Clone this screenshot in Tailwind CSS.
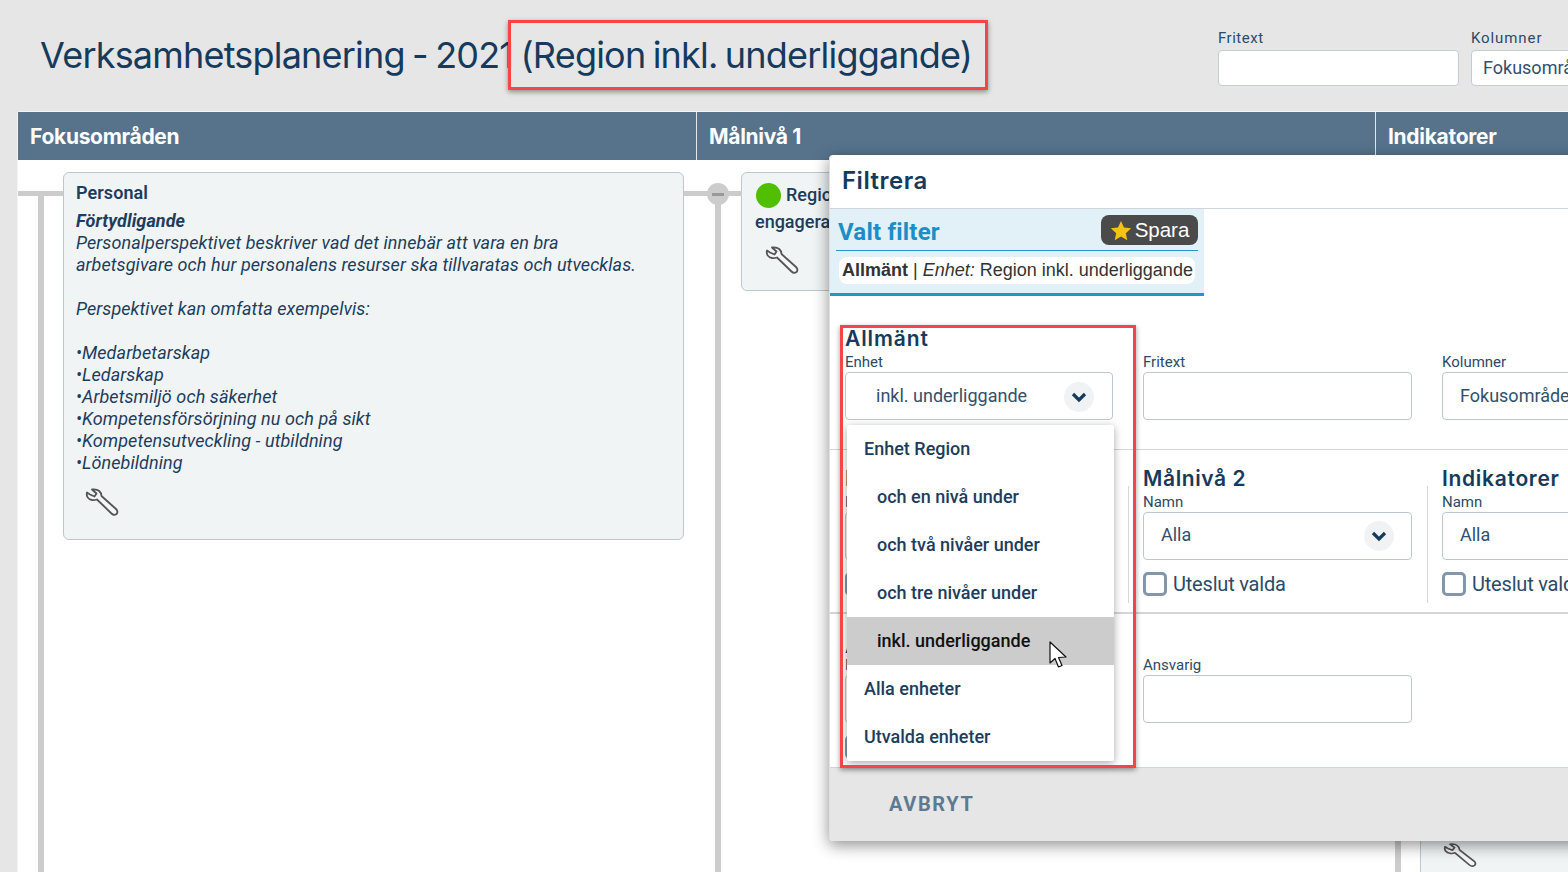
<!doctype html>
<html lang="sv">
<head>
<meta charset="utf-8">
<script src="https://cdn.jsdelivr.net/npm/@tailwindcss/browser@4"></script>
</head>
<body class="m-0">
<div class="relative w-[1568px] h-[872px] overflow-hidden bg-[#e6e6e6] flex flex-col font-['Roboto',sans-serif] text-[#1d3d5c]">

  <!-- Page header -->
  <header class="h-[111px] shrink-0 flex justify-between pl-[40px]">
    <h1 class="mt-[33px] text-[36px] leading-[44px] font-normal tracking-[-0.8px] [word-spacing:-2px] text-[#163a5c] font-['Inter',sans-serif] whitespace-nowrap">Verksamhetsplanering - 2021 (Region inkl. underliggande)</h1>
    <div class="flex gap-3 mt-[30px] w-[350px] shrink-0">
      <div class="w-[241px] shrink-0">
        <div class="text-[15px] leading-[17px] mb-[3px] tracking-[0.5px] text-[#2d4a66]">Fritext</div>
        <div class="h-[36px] bg-white border border-[#c3ccd5] rounded-[4px]"></div>
      </div>
      <div class="w-[241px] shrink-0">
        <div class="text-[15px] leading-[17px] mb-[3px] tracking-[0.9px] text-[#2d4a66]">Kolumner</div>
        <div class="h-[36px] bg-white border border-[#c3ccd5] rounded-[4px] px-[11px] text-[18px] leading-[33px] whitespace-nowrap overflow-hidden text-[#33506b]">Fokusområden</div>
      </div>
    </div>
  </header>

  <!-- Board -->
  <main class="ml-[17px] flex-1 flex flex-col bg-white border-l border-t border-[#f4f4f4] rounded-tl-[4px] w-[1700px] min-h-0">
    <div class="h-[48px] shrink-0 flex bg-[#57738c] text-white text-[21px] font-bold font-['Inter',sans-serif] tracking-[-0.3px] leading-[49px]">
      <div class="w-[679px] pl-[12px] border-r border-[#e6e6e6]">Fokusområden</div>
      <div class="w-[679px] pl-[12px] border-r border-[#e6e6e6]">Målnivå 1</div>
      <div class="flex-1 pl-[12px]">Indikatorer</div>
    </div>
    <div class="flex-1 flex min-h-0">
      <!-- Column 1 -->
      <section class="relative w-[679px] shrink-0 pt-[12px] pl-[45px]">
        <div class="absolute left-0 top-[31px] w-[45px] h-[5px] bg-[#cccccc]"></div>
        <div class="absolute left-[20px] top-[36px] bottom-0 w-[6px] bg-[#cccccc]"></div>
        <div class="absolute left-[666px] top-[31px] w-[13px] h-[5px] bg-[#cccccc]"></div>
        <article class="w-[621px] h-[368px] bg-[#f0f4f5] border border-[#bcc7d1] rounded-[6px] px-[12px] pt-[9px] text-[18px] leading-[22px] text-[#1d3d5c] tracking-[0.08px]">
          <div class="font-semibold">Personal</div>
          <div class="mt-[6px] font-bold italic">Förtydligande</div>
          <div class="italic">Personalperspektivet beskriver vad det innebär att vara en bra<br>arbetsgivare och hur personalens resurser ska tillvaratas och utvecklas.</div>
          <div class="italic mt-[22px]">Perspektivet kan omfatta exempelvis:</div>
          <div class="italic mt-[22px]">
            <div>•Medarbetarskap</div>
            <div>•Ledarskap</div>
            <div>•Arbetsmiljö och säkerhet</div>
            <div>•Kompetensförsörjning nu och på sikt</div>
            <div>•Kompetensutveckling - utbildning</div>
            <div>•Lönebildning</div>
          </div>
          <svg class="mt-[13px] ml-[9px] w-[34px] h-[30px]" viewBox="0 0 34 30" fill="#f4f6f7" stroke="#555" stroke-width="1.8" stroke-linejoin="round"><path d="M7 2.5 L11.5 6.5 L9.5 9.5 L5 7.5 L2 5.5 C1 9 3 12.5 7 13 C9 13.5 10.5 13 12 12.5 L26.5 26.5 C28 28 30 28.2 31.5 27 C33 25.5 32.5 23.5 31 22 L16.5 9 C16.5 5.5 13.5 1.5 7 2.5 Z"/></svg>
        </article>
      </section>
      <!-- Column 2 -->
      <section class="relative w-[679px] shrink-0 pt-[12px] pl-[44px]">
        <div class="absolute left-0 top-[31px] w-[45px] h-[5px] bg-[#cccccc]"></div>
        <div class="absolute left-[18px] top-[36px] bottom-0 w-[6px] bg-[#cccccc]"></div>
        <div class="absolute left-[10px] top-[23px] w-[22px] h-[22px] rounded-full bg-[#cccccc] flex items-center justify-center"><span class="block w-[12px] h-[3px] bg-[#999]"></span></div>
        <article class="w-[500px] h-[119px] bg-[#f0f4f5] border border-[#bcc7d1] rounded-[6px] pl-[13px] pt-[8px] text-[18px] leading-[27px] font-medium text-[#1d3d5c]">
          <div class="flex items-center gap-[5px]"><span class="ml-[1px] w-[25px] h-[25px] rounded-full bg-[#4fbf00] shrink-0"></span><span class="pb-[2px]">Region Personal</span></div>
          <div class="-mt-[2px]">engagerade medarbetare</div>
          <svg class="mt-[10px] ml-[10px] w-[34px] h-[30px]" viewBox="0 0 34 30" fill="#f4f6f7" stroke="#555" stroke-width="1.8" stroke-linejoin="round"><path d="M7 2.5 L11.5 6.5 L9.5 9.5 L5 7.5 L2 5.5 C1 9 3 12.5 7 13 C9 13.5 10.5 13 12 12.5 L26.5 26.5 C28 28 30 28.2 31.5 27 C33 25.5 32.5 23.5 31 22 L16.5 9 C16.5 5.5 13.5 1.5 7 2.5 Z"/></svg>
        </article>
      </section>
      <!-- Column 3 -->
      <section class="relative flex-1 pt-[500px] pl-[44px]">
        <div class="absolute left-[19px] top-[36px] bottom-0 w-[6px] bg-[#cccccc]"></div>
        <article class="h-full w-[300px] bg-[#f0f4f5] border-l border-[#bcc7d1] pt-[182px] pl-[22px]">
          <svg class="w-[34px] h-[26px]" viewBox="0 0 34 30" preserveAspectRatio="none" fill="#f4f6f7" stroke="#555" stroke-width="1.8" stroke-linejoin="round"><path d="M7 2.5 L11.5 6.5 L9.5 9.5 L5 7.5 L2 5.5 C1 9 3 12.5 7 13 C9 13.5 10.5 13 12 12.5 L26.5 26.5 C28 28 30 28.2 31.5 27 C33 25.5 32.5 23.5 31 22 L16.5 9 C16.5 5.5 13.5 1.5 7 2.5 Z"/></svg>
        </article>
      </section>
    </div>
  </main>

  <!-- Filter dialog -->
  <div class="absolute left-[829px] top-[155px] w-[900px] h-[686px] flex flex-col bg-white rounded-tl-[4px] rounded-bl-[4px] border-l border-[#e0e0e0] shadow-[0_4px_16px_rgba(0,0,0,0.45)]">
    <div class="h-[54px] shrink-0 border-b border-[#cfd5da] pl-[12px] text-[24px] leading-[52px] font-semibold tracking-[0.5px] text-[#163a5c] font-['Inter',sans-serif]">Filtrera</div>

    <!-- Selected filter -->
    <div class="h-[117px] shrink-0">
      <div class="w-[374px] h-[87px] bg-[#e2f0f7] border-b-[3px] border-[#2a92c8] px-[6px] pt-[6px]">
        <div class="h-[36px] border-b border-[#2a92c8] flex justify-between items-start">
          <span class="pl-[2px] pt-[2px] text-[24px] leading-[30px] font-bold tracking-[0.2px] text-[#1b8ec6] font-['Roboto',sans-serif]">Valt filter</span>
          <span class="w-[97px] h-[30px] bg-[#4a4a4a] rounded-[8px] flex items-center justify-center gap-[3px] text-white text-[20.5px] font-['Liberation_Sans',sans-serif]">
            <svg class="w-[22px] h-[21px]" viewBox="0 0 24 24" fill="#f6c20f"><path d="M12 1 15.4 8.6 23.6 9.5 17.5 15 19.2 23 12 18.9 4.8 23 6.5 15 .4 9.5 8.6 8.6Z"/></svg>Spara</span>
        </div>
        <div class="mt-[6px] ml-[3px] w-[356px] h-[27px] bg-white rounded-[8px] pl-[3px] text-[18px] leading-[27px] whitespace-nowrap text-[#333] font-['Liberation_Sans',sans-serif]"><b>Allmänt</b> | <i>Enhet:</i> Region inkl. underliggande</div>
      </div>
    </div>

    <!-- Allmänt -->
    <div class="h-[124px] shrink-0 border-b border-[#d5d5d5] flex pl-[15px]">
      <div class="w-[298px] shrink-0">
        <h2 class="h-[24px] text-[21px] leading-[26px] font-semibold tracking-[0.9px] font-['Inter',sans-serif] text-[#163a5c]">Allmänt</h2>
        <div class="text-[15px] leading-[17px] mt-[4px] mb-[1px] text-[#2d4a66]">Enhet</div>
        <div class="relative w-[268px] h-[48px] bg-white border border-[#bcc7d1] rounded-[4px] pl-[30px] text-[18px] leading-[46px] text-[#33506b]">inkl. underliggande
          <span class="absolute right-[18px] top-[9px] w-[30px] h-[30px] rounded-full bg-[#f0f2f3] flex items-center justify-center"><svg class="w-[16px] h-[12px]" viewBox="0 0 16 12" fill="none" stroke="#163a5c" stroke-width="3.2"><path d="M2 3 8 9 14 3"/></svg></span>
        </div>
      </div>
      <div class="w-[299px] shrink-0 pt-[28px]">
        <div class="text-[15px] leading-[17px] mb-[1px] text-[#2d4a66]">Fritext</div>
        <div class="w-[269px] h-[48px] bg-white border border-[#bcc7d1] rounded-[4px]"></div>
      </div>
      <div class="w-[290px] shrink-0 pt-[28px]">
        <div class="text-[15px] leading-[17px] mb-[1px] text-[#2d4a66]">Kolumner</div>
        <div class="w-[269px] h-[48px] bg-white border border-[#bcc7d1] rounded-[4px] pl-[17px] text-[18px] leading-[46px] text-[#33506b]">Fokusområden</div>
      </div>
    </div>

    <!-- Målnivåer -->
    <div class="relative h-[164px] shrink-0 border-b-2 border-[#d5d5d5] flex pl-[15px] pt-[16px]">
      <div class="w-[298px] shrink-0">
        <h2 class="h-[24px] text-[21px] leading-[26px] font-semibold tracking-[0.6px] font-['Inter',sans-serif] text-[#163a5c]">Målnivå 1</h2>
        <div class="text-[15px] leading-[17px] mt-[4px] mb-[1px] text-[#2d4a66]">Namn</div>
        <div class="w-[268px] h-[48px] bg-white border border-[#bcc7d1] rounded-[4px]"></div>
        <div class="mt-[12px] w-[24px] h-[24px] bg-white border-[3px] border-[#8297aa] rounded-[5px]"></div>
      </div>
      <div class="w-[299px] shrink-0">
        <h2 class="h-[24px] text-[21px] leading-[26px] font-semibold tracking-[0.6px] font-['Inter',sans-serif] text-[#163a5c]">Målnivå 2</h2>
        <div class="text-[15px] leading-[17px] mt-[4px] mb-[1px] text-[#2d4a66]">Namn</div>
        <div class="relative w-[269px] h-[48px] bg-white border border-[#bcc7d1] rounded-[4px] pl-[17px] text-[18px] leading-[44px] text-[#33506b]">Alla
          <span class="absolute right-[17px] top-[8px] w-[30px] h-[30px] rounded-full bg-[#f0f2f3] flex items-center justify-center"><svg class="w-[16px] h-[12px]" viewBox="0 0 16 12" fill="none" stroke="#163a5c" stroke-width="3.2"><path d="M2 3 8 9 14 3"/></svg></span>
        </div>
        <label class="mt-[12px] flex items-center gap-[6px] text-[20px] leading-[24px] tracking-[-0.2px] text-[#2d4a66]"><span class="w-[24px] h-[24px] bg-white border-[3px] border-[#8297aa] rounded-[5px]"></span>Uteslut valda</label>
      </div>
      <div class="w-[290px] shrink-0">
        <h2 class="h-[24px] text-[21px] leading-[26px] font-semibold tracking-[0.7px] font-['Inter',sans-serif] text-[#163a5c]">Indikatorer</h2>
        <div class="text-[15px] leading-[17px] mt-[4px] mb-[1px] text-[#2d4a66]">Namn</div>
        <div class="w-[269px] h-[48px] bg-white border border-[#bcc7d1] rounded-[4px] pl-[17px] text-[18px] leading-[44px] text-[#33506b]">Alla</div>
        <label class="mt-[12px] flex items-center gap-[6px] text-[20px] leading-[24px] tracking-[-0.2px] text-[#2d4a66]"><span class="w-[24px] h-[24px] bg-white border-[3px] border-[#8297aa] rounded-[5px]"></span>Uteslut valda</label>
      </div>
      <div class="absolute left-[298px] top-[36px] w-px h-[117px] bg-[#d5d5d5]"></div>
      <div class="absolute left-[597px] top-[36px] w-px h-[117px] bg-[#d5d5d5]"></div>
    </div>

    <!-- Ansvar -->
    <div class="flex-1 flex pl-[15px] pt-[19px]">
      <div class="w-[298px] shrink-0">
        <h2 class="h-[24px] text-[21px] leading-[26px] font-semibold tracking-[0.6px] font-['Inter',sans-serif] text-[#163a5c]">Aktivitet</h2>
        <div class="text-[15px] leading-[17px] mb-[1px] text-[#2d4a66]">Namn</div>
        <div class="w-[268px] h-[48px] bg-white border border-[#bcc7d1] rounded-[4px]"></div>
        <div class="mt-[12px] w-[24px] h-[24px] bg-white border-[3px] border-[#8297aa] rounded-[5px]"></div>
      </div>
      <div class="w-[299px] shrink-0 pt-[24px]">
        <div class="text-[15px] leading-[17px] mb-[1px] text-[#2d4a66]">Ansvarig</div>
        <div class="w-[269px] h-[48px] bg-white border border-[#bcc7d1] rounded-[4px]"></div>
      </div>
    </div>

    <footer class="h-[74px] shrink-0 bg-[#e6e6e6] border-t border-[#cfd5da] rounded-bl-[4px] pl-[59px] text-[20px] leading-[72px] font-bold tracking-[1.6px] text-[#5d7a93]">AVBRYT</footer>

    <!-- Open dropdown -->
    <ul class="absolute left-[17px] top-[270px] w-[267px] h-[336px] bg-white rounded-[2px] shadow-[0_2px_8px_rgba(0,0,0,0.35)] text-[18px] leading-[48px] font-medium text-[#1d3d5c] list-none m-0 p-0">
      <li class="pl-[17px]">Enhet Region</li>
      <li class="pl-[30px]">och en nivå under</li>
      <li class="pl-[30px]">och två nivåer under</li>
      <li class="pl-[30px]">och tre nivåer under</li>
      <li class="pl-[30px] bg-[#cccccc] text-[#111]">inkl. underliggande</li>
      <li class="pl-[17px]">Alla enheter</li>
      <li class="pl-[17px]">Utvalda enheter</li>
    </ul>
  </div>

  <!-- Annotation boxes -->
  <div class="absolute left-[508px] top-[20px] w-[480px] h-[70px] border-[3px] border-[#f44548] shadow-[0_2px_5px_rgba(0,0,0,0.4)]"></div>
  <div class="absolute left-[840px] top-[325px] w-[296px] h-[443px] border-[3px] border-[#f44548] shadow-[0_2px_5px_rgba(0,0,0,0.4)]"></div>

  <!-- Mouse pointer -->
  <svg class="absolute left-[1049px] top-[641px] w-[20px] h-[28px]" viewBox="0 0 20 28" fill="#fff" stroke="#111" stroke-width="1.2" stroke-linejoin="round"><path d="M1 1 V22 L6 17.5 L9.5 26 L13 24.5 L9.5 16.5 L17 16 Z"/></svg>
</div>
</body>
</html>
